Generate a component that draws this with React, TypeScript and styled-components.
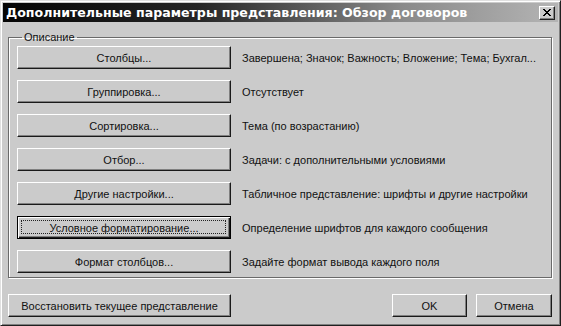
import React from "react";
import styled, { createGlobalStyle } from "styled-components";

const Global = createGlobalStyle`
  html, body { margin: 0; padding: 0; background: #c8c8c8; }
  * { box-sizing: border-box; }
`;

const Window = styled.div`
  width: 561px;
  height: 326px;
  background: #cbcbcb;
  border: 1px solid;
  border-color: #e0e0e0 #202020 #202020 #e0e0e0;
  box-shadow: inset 1px 1px 0 #ffffff, inset -1px -1px 0 #808080;
  padding: 2px;
  display: flex;
  flex-direction: column;
  font-family: "Liberation Sans", Arial, sans-serif;
  font-size: 11px;
  color: #111;
`;

const TitleBar = styled.div`
  height: 19px;
  display: flex;
  align-items: center;
  justify-content: space-between;
  padding: 0 3px 0 3px;
  background: linear-gradient(90deg, #050505 0%, #252525 35%, #8a8a8a 72%, #b4b4b4 100%);
`;

const TitleText = styled.span`
  color: #ffffff;
  font-family: "DejaVu Sans", sans-serif;
  font-weight: bold;
  font-size: 12.6px;
  white-space: nowrap;
`;

const CloseBtn = styled.div`
  width: 16px;
  height: 14px;
  background: #cbcbcb;
  border: 1px solid;
  border-color: #ffffff #202020 #202020 #ffffff;
  box-shadow: inset -1px -1px 0 #808080;
  display: flex;
  align-items: center;
  justify-content: center;
`;

const Body = styled.div`
  flex: 1;
  display: flex;
  flex-direction: column;
  padding: 9px 6px 6px 5px;
`;

const Group = styled.fieldset`
  margin: 0;
  padding: 3px 8px 4px 8px;
  border: 1px solid #6a6a6a;
  box-shadow: 1px 1px 0 #ffffff, inset 1px 1px 0 #ffffff;
  display: flex;
  flex-direction: column;
  gap: 11px;
`;

const Legend = styled.legend`
  padding: 0 2px;
  margin-left: 5px;
  font-size: 11px;
`;

const Row = styled.div`
  display: flex;
  align-items: center;
  gap: 11px;
`;

const Btn = styled.div<{ $w?: number; $focus?: boolean }>`
  width: ${(p) => p.$w ?? 214}px;
  height: 23px;
  flex: none;
  background: #cbcbcb;
  border: 1px solid;
  border-color: ${(p) => (p.$focus ? "#000" : "#ffffff #1a1a1a #1a1a1a #ffffff")};
  box-shadow: ${(p) =>
    p.$focus
      ? "inset 1px 1px 0 #ffffff, inset -1px -1px 0 #1a1a1a, inset -2px -2px 0 #808080"
      : "inset -1px -1px 0 #808080"};
  display: flex;
  align-items: center;
  justify-content: center;
  position: relative;
  white-space: nowrap;
`;

const FocusRing = styled.span`
  position: absolute;
  inset: 3px 4px 4px 3px;
  border: 1px dotted #222;
`;

const Desc = styled.span`
  white-space: nowrap;
`;

const Footer = styled.div`
  display: flex;
  align-items: center;
  margin-top: 16px;
`;

const Spacer = styled.div`
  flex: 1;
`;

const FooterGap = styled.div`
  width: 9px;
`;

const rows: { label: string; desc: string; focus?: boolean }[] = [
  { label: "Столбцы...", desc: "Завершена; Значок; Важность; Вложение; Тема; Бухгал..." },
  { label: "Группировка...", desc: "Отсутствует" },
  { label: "Сортировка...", desc: "Тема (по возрастанию)" },
  { label: "Отбор...", desc: "Задачи: с дополнительными условиями" },
  { label: "Другие настройки...", desc: "Табличное представление: шрифты и другие настройки" },
  { label: "Условное форматирование...", desc: "Определение шрифтов для каждого сообщения", focus: true },
  { label: "Формат столбцов...", desc: "Задайте формат вывода каждого поля" },
];

export default function App() {
  return (
    <>
      <Global />
      <Window>
        <TitleBar>
          <TitleText>Дополнительные параметры представления: Обзор договоров</TitleText>
          <CloseBtn>
            <svg width="9" height="8" viewBox="0 0 9 8">
              <path d="M1 0 L8 7 M0 0 L7 7 M8 0 L1 7 M7 0 L0 7" stroke="#000" strokeWidth="1" />
            </svg>
          </CloseBtn>
        </TitleBar>
        <Body>
          <Group>
            <Legend>Описание</Legend>
            {rows.map((r) => (
              <Row key={r.label}>
                <Btn $focus={r.focus}>
                  {r.focus && <FocusRing />}
                  {r.label}
                </Btn>
                <Desc>{r.desc}</Desc>
              </Row>
            ))}
          </Group>
          <Footer>
            <Btn $w={223}>Восстановить текущее представление</Btn>
            <Spacer />
            <Btn $w={75}>OK</Btn>
            <FooterGap />
            <Btn $w={76}>Отмена</Btn>
          </Footer>
        </Body>
      </Window>
    </>
  );
}
